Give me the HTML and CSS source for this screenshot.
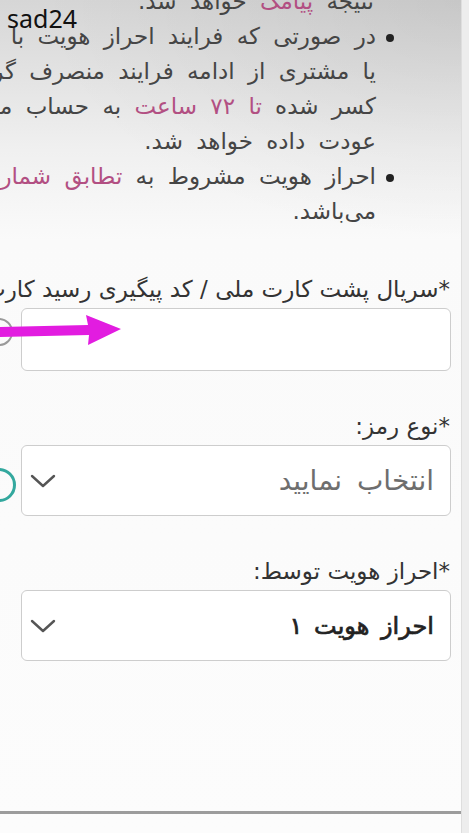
FILE: index.html
```html
<!DOCTYPE html>
<html lang="fa">
<head>
    <meta charset="UTF-8">
    <meta name="viewport" content="width=device-width, initial-scale=1.0">
    <title>احراز هویت</title>
    <link rel="stylesheet" href="styles.css">
</head>
<body>
    <div class="page">
        <div class="watermark">sad24</div>

        <ul class="notes">
            <li class="tail">
                <span class="line">نتیجه <span class="accent">پیامک</span> خواهد شد.</span>
            </li>
            <li>
                <span class="dot"></span>
                <div class="text">
                    <span class="line">در صورتی که فرایند احراز هویت با خطا مواجه شود</span>
                    <span class="line">یا مشتری از ادامه فرایند منصرف گردد، مبلغ</span>
                    <span class="line">کسر شده <span class="accent">تا ۷۲ ساعت</span> به حساب مشتری</span>
                    <span class="line">عودت داده خواهد شد.</span>
                </div>
            </li>
            <li>
                <span class="dot"></span>
                <div class="text">
                    <span class="line">احراز هویت مشروط به <span class="accent">تطابق شماره</span> همراه و کد ملی</span>
                    <span class="line">می‌باشد.</span>
                </div>
            </li>
        </ul>

        <div class="form">
            <div class="field">
                <label class="label" for="serial">*سریال پشت کارت ملی / کد پیگیری رسید کارت ملی:</label>
                <div class="box input-box">
                    <input type="text" id="serial">
                </div>
                <span class="ring ring-grey"></span>
                <svg class="pointer" width="124" height="36" viewBox="0 0 124 36">
                    <polygon points="0,14 88,12 86,2 121,16 88,32 89,22 0,24" fill="#e21ce0"/>
                </svg>
            </div>

            <div class="field">
                <div class="label">*نوع رمز:</div>
                <div class="box select-box">
                    <span class="value placeholder">انتخاب نمایید</span>
                    <svg class="chevron" width="26" height="14" viewBox="0 0 26 14">
                        <polyline points="2,2 13,12 24,2" fill="none" stroke="#555" stroke-width="2.4" stroke-linecap="round" stroke-linejoin="round"/>
                    </svg>
                </div>
                <span class="ring ring-teal"></span>
            </div>

            <div class="field">
                <div class="label">*احراز هویت توسط:</div>
                <div class="box select-box">
                    <span class="value selected">احراز هویت ۱</span>
                    <svg class="chevron" width="26" height="14" viewBox="0 0 26 14">
                        <polyline points="2,2 13,12 24,2" fill="none" stroke="#555" stroke-width="2.4" stroke-linecap="round" stroke-linejoin="round"/>
                    </svg>
                </div>
            </div>
        </div>

        <hr class="divider">
    </div>
</body>
</html>
```

FILE: styles.css
```css
body {
    margin: 0;
    overflow: hidden;
    font-family: "DejaVu Sans", "Noto Sans", sans-serif;
    background: #ededed;
}
.page {
    position: relative;
    direction: rtl;
    width: 461px;
    height: 833px;
    overflow: hidden;
    border-right: 1px solid #dedede;
    background:
        radial-gradient(ellipse 420px 240px at 100% 0, rgba(0, 0, 0, 0.07), rgba(0, 0, 0, 0) 100%),
        linear-gradient(to bottom, #d6d6d6 0, #e2e2e2 70px, #f0f0f0 150px, #fafafa 240px, #fcfcfc 100%);
}
.watermark {
    position: absolute;
    top: 1px;
    left: 7px;
    direction: ltr;
    font-family: "Noto Sans", sans-serif;
    font-size: 25px;
    color: #111;
    z-index: 2;
}
.notes {
    list-style: none;
    margin: -16px 0 0 0;
    padding: 0 67px 0 0;
    color: #454545;
    font-size: 23px;
    line-height: 35px;
    word-spacing: 6px;
}
.notes li {
    display: flex;
    align-items: flex-start;
    gap: 10px;
}
.notes li.tail {
    padding-right: 20px;
}
.dot {
    flex-shrink: 0;
    width: 8px;
    height: 8px;
    margin-top: 15px;
    border-radius: 50%;
    background: #222;
}
.text {
    flex-shrink: 0;
    width: 650px;
}
.line {
    display: block;
    white-space: nowrap;
}
.tail .line {
    width: 650px;
}
.accent {
    color: #b24f82;
}
.form {
    margin-top: 45px;
    padding: 0 10px 0 21px;
}
.field {
    position: relative;
    margin-bottom: 40px;
}
.label {
    display: block;
    white-space: nowrap;
    font-size: 23px;
    line-height: 30px;
    color: #333;
    margin-bottom: 4px;
    padding-right: 1px;
}
.box {
    box-sizing: border-box;
    background: #fff;
    border: 1.5px solid #cdcdcd;
    border-radius: 6px;
}
.input-box {
    height: 63px;
}
.input-box input {
    width: 100%;
    height: 100%;
    border: none;
    background: transparent;
    outline: none;
}
.select-box {
    height: 71px;
    display: flex;
    align-items: center;
    justify-content: space-between;
    padding: 0 16px 0 8px;
}
.value {
    font-size: 28px;
    word-spacing: 6px;
}
.placeholder {
    color: #6e6e6e;
}
.selected {
    font-size: 24px;
    word-spacing: 4px;
    color: #222;
    -webkit-text-stroke: 0.7px #222;
}
.ring {
    position: absolute;
    border-radius: 50%;
    box-sizing: border-box;
}
.ring-grey {
    left: -36px;
    top: 44px;
    width: 28px;
    height: 28px;
    border: 2px solid #9a9a9a;
}
.ring-teal {
    left: -39px;
    top: 57px;
    width: 34px;
    height: 34px;
    border: 3px solid #33a89e;
}
.pointer {
    position: absolute;
    left: -21px;
    top: 39px;
}
.divider {
    position: absolute;
    left: 0;
    right: 0;
    top: 811px;
    margin: 0;
    border: 0;
    height: 3px;
    background: #9c9c9c;
}
```
